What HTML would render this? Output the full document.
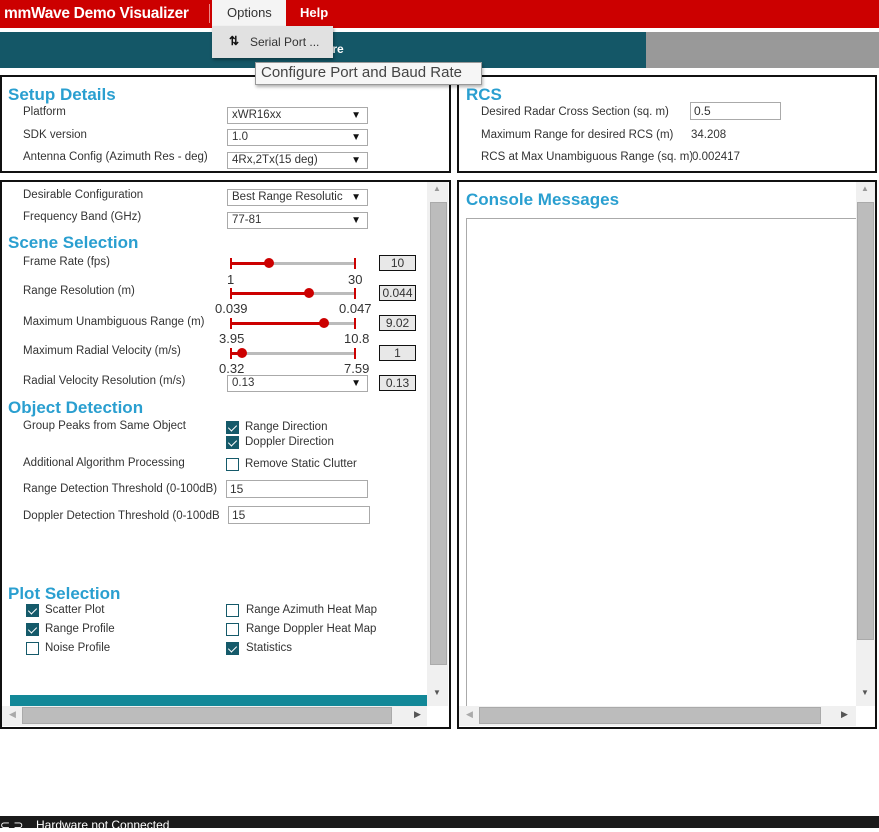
<!DOCTYPE html>
<html><head><style>
*{margin:0;padding:0;box-sizing:border-box}
body{width:879px;height:828px;position:relative;background:#fff;font-family:"Liberation Sans",sans-serif;font-size:11.5px;color:#333;overflow:hidden}
.a{position:absolute;white-space:nowrap}
.h{position:absolute;color:#2a9fd0;font-weight:bold;font-size:17px;white-space:nowrap}
.sel{position:absolute;height:17px;border:1px solid #aaa;background:#fff;padding-left:4px;font-size:11.5px;line-height:15px;overflow:hidden}
.sel:after{content:"▼";position:absolute;right:6px;top:0;font-size:10px;color:#111;background:#fff}
.inp{position:absolute;height:18px;border:1px solid #aaa;background:#fff;padding-left:3px;font-size:12px;line-height:16px}
.box{position:absolute;left:379px;width:37px;height:16px;border:1px solid #111;background:#e8e8e8;text-align:center;font-size:12px;line-height:14px}
.trk{position:absolute;left:231px;width:124px;height:3px;background:#bbb}
.trk i{position:absolute;left:0;top:0;height:3px;background:#c00}
.trk b{position:absolute;top:-4px;width:10px;height:10px;border-radius:50%;background:#c00;margin-left:-5px}
.trk:before,.trk:after{content:"";position:absolute;top:-4px;width:2px;height:11px}
.trk:before{left:-1px;background:#c00}.trk:after{right:-1px;background:#c00}
.cb{position:absolute;width:13px;height:13px;border:1px solid #155a6a;background:#fff}
.cb.on{background:#155a6a}
.cb.on:after{content:"";position:absolute;left:3px;top:1px;width:4px;height:7px;border:solid #fff;border-width:0 1.5px 1.5px 0;transform:rotate(45deg)}
.panel{position:absolute;border:2px solid #111;background:#fff}
.top{z-index:5}
</style></head><body>
<div class="a" style="left:0;top:0;width:879px;height:28px;background:#cc0000"></div>
<div class="a" style="left:4px;top:5px;color:#fff;font-weight:bold;font-size:15.5px;letter-spacing:-0.3px">mmWave Demo Visualizer</div>
<div class="a" style="left:209px;top:4px;width:1px;height:19px;background:#e88"></div>
<div class="a" style="left:212px;top:0;width:74px;height:26px;background:#f4f4f4"></div>
<div class="a" style="left:227px;top:5px;font-size:13px;color:#333">Options</div>
<div class="a" style="left:300px;top:5px;font-size:13px;color:#fff;font-weight:bold">Help</div>
<div class="a" style="left:0;top:32px;width:646px;height:36px;background:#145767"></div>
<div class="a" style="left:646px;top:32px;width:233px;height:36px;background:#999"></div>
<div class="a" style="left:325px;top:42px;color:#fff;font-weight:bold;font-size:12px">ure</div>
<div class="a top" style="left:212px;top:26px;width:121px;height:32px;background:#e1e1e1;box-shadow:1px 2px 3px rgba(0,0,0,.35)"></div>
<div class="a top" style="left:229px;top:34px;font-size:12px;color:#111;font-weight:bold">⇅</div>
<div class="a top" style="left:250px;top:35px;font-size:12px;color:#333">Serial Port ...</div>
<div class="a top" style="left:255px;top:62px;width:227px;height:23px;background:#f6f6f6;border:1px solid #999;box-shadow:1px 2px 3px rgba(0,0,0,.3)"></div>
<div class="a top" style="left:261px;top:64px;font-size:15px;color:#444">Configure Port and Baud Rate</div>

<div class="panel" style="left:0;top:75px;width:451px;height:98px"></div>
<div class="h" style="left:8px;top:85px">Setup Details</div>
<div class="a" style="left:23px;top:106px">Platform</div>
<div class="sel" style="left:227px;top:107px;width:141px">xWR16xx</div>
<div class="a" style="left:23px;top:129px">SDK version</div>
<div class="sel" style="left:227px;top:129px;width:141px">1.0</div>
<div class="a" style="left:23px;top:151px">Antenna Config (Azimuth Res - deg)</div>
<div class="sel" style="left:227px;top:152px;width:141px">4Rx,2Tx(15 deg)</div>

<div class="panel" style="left:457px;top:75px;width:420px;height:98px"></div>
<div class="h" style="left:466px;top:85px">RCS</div>
<div class="a" style="left:481px;top:106px">Desired Radar Cross Section (sq. m)</div>
<div class="inp" style="left:690px;top:102px;width:91px">0.5</div>
<div class="a" style="left:481px;top:129px">Maximum Range for desired RCS (m)</div>
<div class="a" style="left:691px;top:129px">34.208</div>
<div class="a" style="left:481px;top:151px">RCS at Max Unambiguous Range (sq. m)</div>
<div class="a" style="left:692px;top:151px;background:#fff">0.002417</div>

<div class="panel" style="left:0;top:180px;width:451px;height:549px"></div>
<div class="a" style="left:427px;top:182px;width:21px;height:524px;background:#f0f0f0"></div>
<div class="a" style="left:430px;top:202px;width:17px;height:463px;background:#bcbcbc;border:1px solid #aaa"></div>
<div class="a" style="left:433px;top:184px;font-size:8px;color:#999">▲</div>
<div class="a" style="left:433px;top:688px;font-size:8px;color:#555">▼</div>
<div class="a" style="left:10px;top:695px;width:417px;height:12px;background:#128898"></div>
<div class="a" style="left:2px;top:706px;width:425px;height:20px;background:#f0f0f0"></div>
<div class="a" style="left:22px;top:707px;width:370px;height:17px;background:#bcbcbc;border:1px solid #aaa"></div>
<div class="a" style="left:9px;top:709px;font-size:9px;color:#aaa">◀</div>
<div class="a" style="left:414px;top:709px;font-size:9px;color:#555">▶</div>

<div class="a" style="left:23px;top:189px">Desirable Configuration</div>
<div class="sel" style="left:227px;top:189px;width:141px">Best Range Resolutic</div>
<div class="a" style="left:23px;top:211px">Frequency Band (GHz)</div>
<div class="sel" style="left:227px;top:212px;width:141px">77-81</div>
<div class="h" style="left:8px;top:233px">Scene Selection</div>

<div class="a" style="left:23px;top:256px">Frame Rate (fps)</div>
<div class="trk" style="top:262px"><i style="width:38px"></i><b style="left:38px"></b></div>
<div class="box" style="top:255px">10</div>
<div class="a" style="left:227px;top:272px;font-size:13px">1</div>
<div class="a" style="left:348px;top:272px;font-size:13px">30</div>

<div class="a" style="left:23px;top:285px">Range Resolution (m)</div>
<div class="trk" style="top:292px"><i style="width:78px"></i><b style="left:78px"></b></div>
<div class="box" style="top:285px">0.044</div>
<div class="a" style="left:215px;top:301px;font-size:13px">0.039</div>
<div class="a" style="left:339px;top:301px;font-size:13px">0.047</div>

<div class="a" style="left:23px;top:316px">Maximum Unambiguous Range (m)</div>
<div class="trk" style="top:322px"><i style="width:93px"></i><b style="left:93px"></b></div>
<div class="box" style="top:315px">9.02</div>
<div class="a" style="left:219px;top:331px;font-size:13px">3.95</div>
<div class="a" style="left:344px;top:331px;font-size:13px">10.8</div>

<div class="a" style="left:23px;top:345px">Maximum Radial Velocity (m/s)</div>
<div class="trk" style="top:352px"><i style="width:11px"></i><b style="left:11px"></b></div>
<div class="box" style="top:345px">1</div>
<div class="a" style="left:219px;top:361px;font-size:13px">0.32</div>
<div class="a" style="left:344px;top:361px;font-size:13px">7.59</div>

<div class="a" style="left:23px;top:375px">Radial Velocity Resolution (m/s)</div>
<div class="sel" style="left:227px;top:375px;width:141px">0.13</div>
<div class="box" style="top:375px">0.13</div>

<div class="h" style="left:8px;top:398px">Object Detection</div>
<div class="a" style="left:23px;top:420px">Group Peaks from Same Object</div>
<div class="cb on" style="left:226px;top:421px"></div><div class="a" style="left:245px;top:421px">Range Direction</div>
<div class="cb on" style="left:226px;top:436px"></div><div class="a" style="left:245px;top:436px">Doppler Direction</div>
<div class="a" style="left:23px;top:457px">Additional Algorithm Processing</div>
<div class="cb" style="left:226px;top:458px"></div><div class="a" style="left:245px;top:458px">Remove Static Clutter</div>
<div class="a" style="left:23px;top:483px">Range Detection Threshold (0-100dB)</div>
<div class="inp" style="left:226px;top:480px;width:142px">15</div>
<div class="a" style="left:23px;top:510px;width:205px;overflow:hidden">Doppler Detection Threshold (0-100dB</div>
<div class="inp" style="left:228px;top:506px;width:142px">15</div>

<div class="h" style="left:8px;top:584px">Plot Selection</div>
<div class="cb on" style="left:26px;top:604px"></div><div class="a" style="left:45px;top:604px">Scatter Plot</div>
<div class="cb on" style="left:26px;top:623px"></div><div class="a" style="left:45px;top:623px">Range Profile</div>
<div class="cb" style="left:26px;top:642px"></div><div class="a" style="left:45px;top:642px">Noise Profile</div>
<div class="cb" style="left:226px;top:604px"></div><div class="a" style="left:246px;top:604px">Range Azimuth Heat Map</div>
<div class="cb" style="left:226px;top:623px"></div><div class="a" style="left:246px;top:623px">Range Doppler Heat Map</div>
<div class="cb on" style="left:226px;top:642px"></div><div class="a" style="left:246px;top:642px">Statistics</div>

<div class="panel" style="left:457px;top:180px;width:420px;height:549px"></div>
<div class="h" style="left:466px;top:190px">Console Messages</div>
<div class="a" style="left:466px;top:218px;width:391px;height:489px;border:1px solid #aaa;border-right:none;border-bottom:none"></div>
<div class="a" style="left:856px;top:182px;width:19px;height:524px;background:#f0f0f0"></div>
<div class="a" style="left:857px;top:202px;width:17px;height:438px;background:#bcbcbc;border:1px solid #aaa"></div>
<div class="a" style="left:861px;top:184px;font-size:8px;color:#999">▲</div>
<div class="a" style="left:861px;top:688px;font-size:8px;color:#555">▼</div>
<div class="a" style="left:459px;top:706px;width:397px;height:20px;background:#f0f0f0"></div>
<div class="a" style="left:479px;top:707px;width:342px;height:17px;background:#bcbcbc;border:1px solid #aaa"></div>
<div class="a" style="left:466px;top:709px;font-size:9px;color:#aaa">◀</div>
<div class="a" style="left:841px;top:709px;font-size:9px;color:#555">▶</div>

<div class="a" style="left:0;top:816px;width:879px;height:12px;background:#1a1a1a"></div>
<div class="a" style="left:0;top:818px;color:#fff;font-size:12px">⊂ ⊃</div>
<div class="a" style="left:36px;top:818px;color:#fff;font-size:12px">Hardware not Connected</div>
</body></html>
